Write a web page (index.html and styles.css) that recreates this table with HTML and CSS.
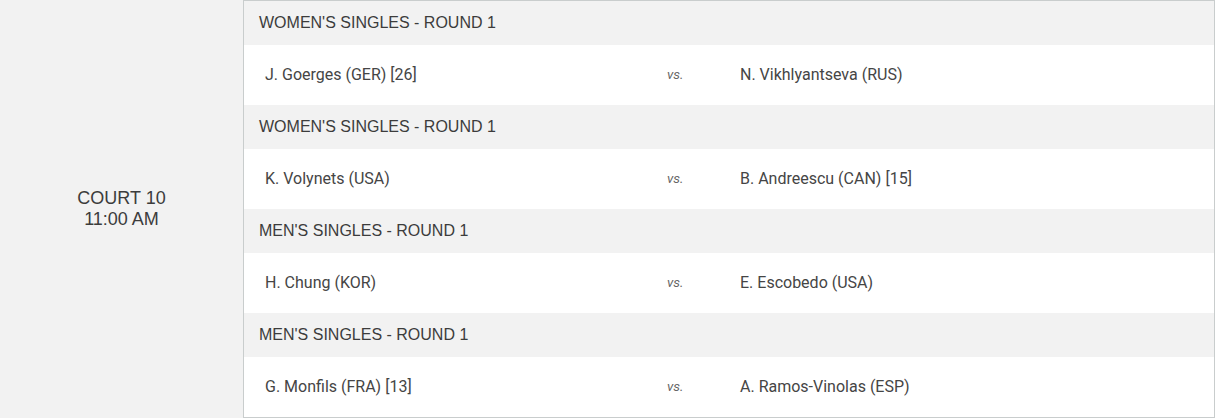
FILE: index.html
```html
<!DOCTYPE html>
<html>
<head>
<meta charset="utf-8">
<link rel="stylesheet" href="styles.css">
</head>
<body>
<div class="schedule">
  <div class="court">
    <div>COURT 10</div>
    <div>11:00 AM</div>
  </div>
  <div class="matches">
    <div class="event">WOMEN'S SINGLES - ROUND 1</div>
    <div class="match">
      <div class="player">J. Goerges (GER) [26]</div>
      <div class="vs">vs.</div>
      <div class="player">N. Vikhlyantseva (RUS)</div>
    </div>
    <div class="event">WOMEN'S SINGLES - ROUND 1</div>
    <div class="match">
      <div class="player">K. Volynets (USA)</div>
      <div class="vs">vs.</div>
      <div class="player">B. Andreescu (CAN) [15]</div>
    </div>
    <div class="event">MEN'S SINGLES - ROUND 1</div>
    <div class="match">
      <div class="player">H. Chung (KOR)</div>
      <div class="vs">vs.</div>
      <div class="player">E. Escobedo (USA)</div>
    </div>
    <div class="event">MEN'S SINGLES - ROUND 1</div>
    <div class="match">
      <div class="player">G. Monfils (FRA) [13]</div>
      <div class="vs">vs.</div>
      <div class="player">A. Ramos-Vinolas (ESP)</div>
    </div>
  </div>
</div>
</body>
</html>
```

FILE: styles.css
```css
html, body {
  margin: 0;
  padding: 0;
  background: #fff;
}
.schedule {
  display: flex;
  width: 1215px;
  height: 418px;
}
.court {
  width: 243px;
  background: #f2f2f2;
  display: flex;
  flex-direction: column;
  justify-content: center;
  align-items: center;
  font-family: "Liberation Sans", Arial, sans-serif;
  font-size: 18px;
  line-height: 21px;
  color: #3c3c3c;
}
.matches {
  flex: 1;
  border: 1px solid #c9cdcd;
  display: flex;
  flex-direction: column;
}
.event {
  height: 44px;
  display: flex;
  align-items: center;
  padding-left: 15px;
  background: #f2f2f2;
  font-family: "Liberation Sans", Arial, sans-serif;
  font-size: 16px;
  line-height: 18px;
  color: #3c3c3c;
}
.match {
  height: 60px;
  box-sizing: border-box;
  padding-bottom: 2px;
  display: grid;
  grid-template-columns: 402px 73px 1fr;
  align-items: center;
  padding-left: 21px;
  background: #fff;
  font-family: Roboto, "Noto Sans", sans-serif;
  font-size: 16px;
  color: #454545;
}
.vs {
  font-style: italic;
  font-size: 13.5px;
  color: #666;
}
```
